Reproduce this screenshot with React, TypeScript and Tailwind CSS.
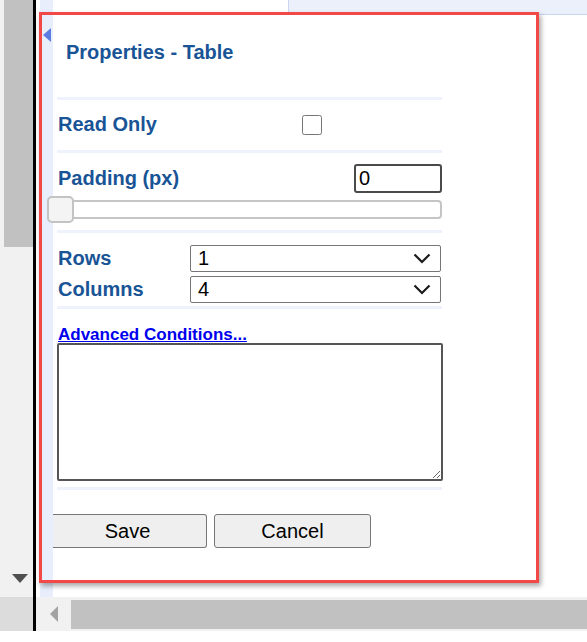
import React from "react";

const Sep = ({ mt }: { mt: string }) => (
  <div className={`${mt} ml-[4px] w-[385px] h-[3px] bg-[#edf2fc] shrink-0`} />
);

const Chevron = () => (
  <svg width="18" height="11" viewBox="0 0 18 11" className="shrink-0">
    <path d="M1.5 1.5 L9 9 L16.5 1.5" fill="none" stroke="#1a1a1a" strokeWidth="2.2" />
  </svg>
);

const SelectBox = ({ value }: { value: string }) => (
  <div className="w-[251px] h-[27px] border border-[#767676] rounded-[2px] bg-white flex items-center justify-between pl-[7px] pr-[9px]">
    <span className="text-[20px] leading-[23px] text-black">{value}</span>
    <Chevron />
  </div>
);

export default function App() {
  return (
    <div
      className="w-[587px] h-[642px] bg-white flex flex-col overflow-hidden"
      style={{ fontFamily: '"Liberation Sans", Arial, sans-serif' }}
    >
      <div className="flex h-[631px]">
        {/* vertical scrollbar */}
        <div className="w-[33px] flex flex-col">
          <div className="h-[597px] bg-[#f1f1f1] flex flex-col justify-between">
            <div className="ml-[4px] w-[29px] h-[247px] bg-[#c1c1c1]" />
            <div className="ml-[12px] mb-[14px]">
              <svg width="16" height="9" viewBox="0 0 16 9">
                <path d="M0 0 L16 0 L8 9 Z" fill="#505050" />
              </svg>
            </div>
          </div>
          <div className="h-[34px] bg-[#dcdcdc]" />
        </div>
        <div className="w-[3px] bg-black" />
        {/* main */}
        <div className="flex-1 flex flex-col">
          <div className="relative h-[597px] flex">
            <div className="w-[4px] bg-white" />
            <div className="w-[13px] bg-[#e8eefb]" />
            <div className="w-[235px] bg-white" />
            <div className="flex-1">
              <div className="h-[15px] bg-[#ebf0fb] border-l border-b border-[#c9d6f0]" />
            </div>

            {/* dialog */}
            <div className="absolute left-[3px] top-[12px] w-[500px] h-[571px] border-[3px] border-[#f34848] bg-white shadow-[2px_3px_5px_rgba(0,0,0,0.35)] flex">
              <div className="w-[11px] bg-[#e8eefb] shrink-0 flex flex-col">
                <svg width="8" height="14" viewBox="0 0 8 14" className="mt-[13px] ml-[1px]">
                  <path d="M8 0 L0 7 L8 14 Z" fill="#5b7de2" />
                </svg>
              </div>
              <div className="flex-1 flex flex-col">
                <div className="mt-[26px] pl-[13px] text-[20px] leading-[23px] font-bold text-[#195496]">
                  Properties - Table
                </div>
                <Sep mt="mt-[33px]" />
                <div className="mt-[13px] h-[23px] pl-[5px] flex items-center">
                  <span className="w-[244px] text-[20px] leading-[23px] font-bold text-[#195496]">Read Only</span>
                  <input type="checkbox" className="m-0 w-[20px] h-[20px]" />
                </div>
                <Sep mt="mt-[14px]" />
                <div className="mt-[11px] ml-[5px] w-[384px] h-[29px] flex items-start justify-between">
                  <span className="mt-[3px] text-[20px] leading-[23px] font-bold text-[#195496]">Padding (px)</span>
                  <input
                    type="text"
                    defaultValue="0"
                    className="w-[88px] h-[29px] border-2 border-[#4a4a4a] rounded-[3px] pl-[3px] text-[20px] leading-[23px] text-black outline-none"
                  />
                </div>
                <div className="mt-[3px] -ml-[6px] w-[395px] h-[27px] relative flex items-center">
                  <div className="ml-[1px] flex-1 h-[19px] border-2 border-[#c5c5c5] rounded-[4px] bg-white" />
                  <div className="absolute left-0 top-0 w-[27px] h-[27px] bg-[#f4f4f4] border-2 border-[#c3c3c3] rounded-[5px]" />
                </div>
                <Sep mt="mt-[7px]" />
                <div className="mt-[12px] pl-[5px] flex items-center">
                  <span className="w-[132px] text-[20px] leading-[23px] font-bold text-[#195496]">Rows</span>
                  <SelectBox value="1" />
                </div>
                <div className="mt-[4px] pl-[5px] flex items-center">
                  <span className="w-[132px] text-[20px] leading-[23px] font-bold text-[#195496]">Columns</span>
                  <SelectBox value="4" />
                </div>
                <Sep mt="mt-[3px]" />
                <div className="mt-[14px] pl-[5px] h-[20px]">
                  <a href="#" className="text-[17px] leading-[20px] font-bold text-[#0000ee] underline">
                    Advanced Conditions...
                  </a>
                </div>
                <textarea className="ml-[4px] w-[386px] h-[138px] border-2 border-[#555555] rounded-[2px] bg-white outline-none shrink-0" />
                <Sep mt="mt-[6px]" />
                <div className="mt-[24px] flex gap-[7px]">
                  <button className="w-[154px] h-[34px] bg-[#efefef] border border-l-0 border-[#767676] rounded-r-[3px] text-[20px] leading-[23px] text-black pr-[4px]">
                    Save
                  </button>
                  <button className="w-[157px] h-[34px] bg-[#efefef] border border-[#767676] rounded-[3px] text-[20px] leading-[23px] text-black">
                    Cancel
                  </button>
                </div>
              </div>
            </div>
          </div>
          {/* horizontal scrollbar */}
          <div className="h-[34px] bg-[#f1f1f1] flex items-center">
            <svg width="8" height="16" viewBox="0 0 8 16" className="ml-[14px]">
              <path d="M8 0 L0 8 L8 16 Z" fill="#a3a3a3" />
            </svg>
            <div className="ml-[13px] flex-1 h-[29px] bg-[#c1c1c1]" />
          </div>
        </div>
      </div>
    </div>
  );
}
